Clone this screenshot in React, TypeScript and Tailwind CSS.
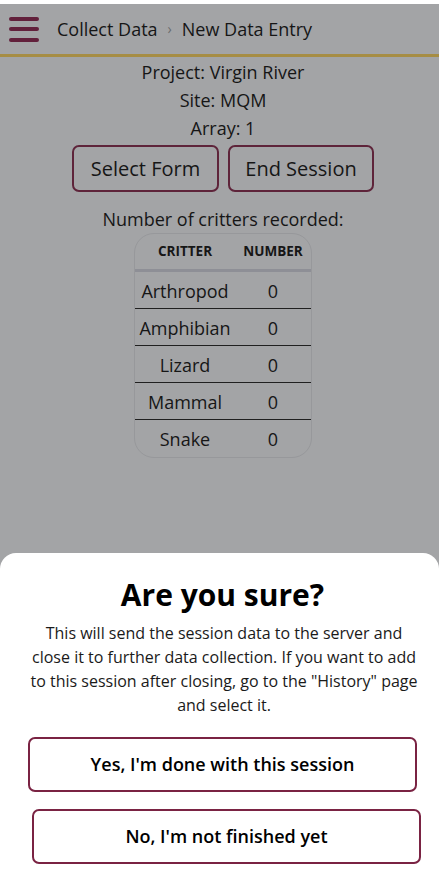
import React from "react";

const rows = ["Arthropod", "Amphibian", "Lizard", "Mammal", "Snake"];

export default function App() {
  return (
    <div
      className="relative h-[878px] w-full overflow-hidden bg-[#a3a4a6] text-[#161616]"
      style={{ fontFamily: '"Open Sans", "Noto Sans", sans-serif' }}
    >
      <div className="h-[4px] bg-white" />
      <header className="flex h-[53px] items-center border-b-[3px] border-[#a68d44] pl-[9px]">
        <div className="flex w-[30px] flex-col gap-[6.5px]">
          <span className="h-[4px] rounded-full bg-[#62203b]" />
          <span className="h-[4px] rounded-full bg-[#62203b]" />
          <span className="h-[4px] rounded-full bg-[#62203b]" />
        </div>
        <nav className="ml-[18px] flex items-center text-[18px] leading-[24px]">
          <span>Collect Data</span>
          <span className="mx-[10px] text-[14px] text-[#6a6b6d]">›</span>
          <span>New Data Entry</span>
        </nav>
      </header>

      <main className="flex flex-col items-center pl-[7px] pt-[1px] text-[18px] leading-[28px]">
        <p>Project: Virgin River</p>
        <p>Site: MQM</p>
        <p>Array: 1</p>
        <div className="mt-[3px] flex gap-[9px]">
          <button className="h-[47px] w-[147px] rounded-[7px] border-2 border-[#5e243a] text-[20px]">
            Select Form
          </button>
          <button className="h-[47px] w-[146px] rounded-[7px] border-2 border-[#5e243a] text-[20px]">
            End Session
          </button>
        </div>
        <p className="mt-[13px]">Number of critters recorded:</p>
        <div className="w-[178px] overflow-hidden rounded-[20px] border border-[#97989b]">
          <div className="flex h-[38px] items-center border-b-[3px] border-[#8e8f96] text-[13.5px] font-bold leading-none">
            <span className="w-[100px] text-center">CRITTER</span>
            <span className="flex-1 text-center">NUMBER</span>
          </div>
          {rows.map((r, i) => (
            <div
              key={r}
              className={
                "flex h-[37px] items-center pt-[1px] text-[18px] " +
                (i < rows.length - 1 ? "border-b border-[#202020]" : "")
              }
            >
              <span className="w-[100px] text-center">{r}</span>
              <span className="flex-1 text-center">0</span>
            </div>
          ))}
        </div>
      </main>

      <div className="absolute bottom-0 left-0 right-0 flex h-[325px] flex-col items-stretch rounded-t-[16px] bg-white pt-[23px] pl-[28px] pr-[22px]">
        <h2 className="text-center text-[30px] font-bold leading-[38px] text-black">
          Are you sure?
        </h2>
        <p className="mx-auto mt-[7px] w-[392px] text-center text-[16px] leading-[24px] text-[#1a1a1a]">
          This will send the session data to the server and close it to further data
          collection. If you want to add to this session after closing, go to the
          "History" page and select it.
        </p>
        <button className="mt-[20px] h-[55px] w-[389px] rounded-[7px] border-2 border-[#7a2343] text-[18px] font-semibold text-black">
          Yes, I'm done with this session
        </button>
        <button className="ml-[4px] mt-[17px] h-[55px] w-[389px] rounded-[7px] border-2 border-[#7a2343] text-[18px] font-semibold text-black">
          No, I'm not finished yet
        </button>
      </div>
    </div>
  );
}
